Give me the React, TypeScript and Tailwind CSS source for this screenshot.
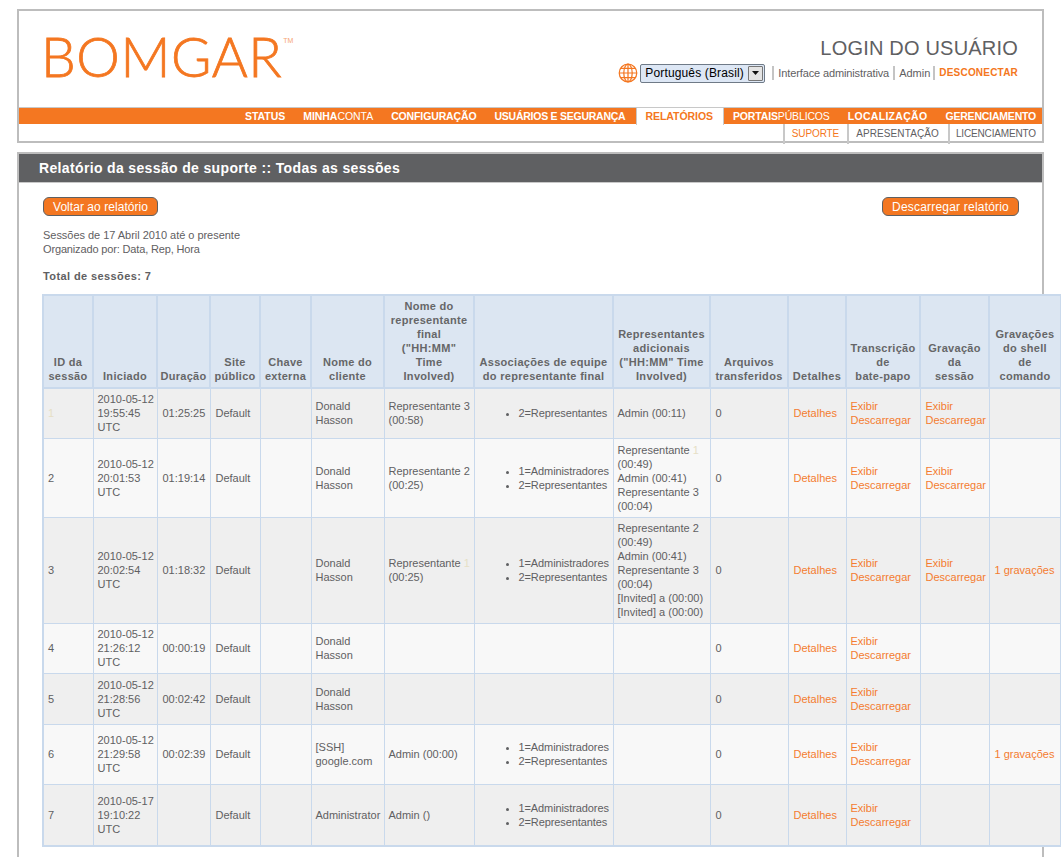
import React from "react";

type Row = {
  id: React.ReactNode;
  date: string[];
  dur: string;
  client: string[];
  rep: React.ReactNode[];
  teams: string[];
  extra: React.ReactNode[];
  recording: boolean;
  shell: boolean;
  height: string;
  odd: boolean;
};

const faintOne = <span className="text-[#e6dfc6]">1</span>;

const ADM = "1=Administradores";
const REP = "2=Representantes";

const rows: Row[] = [
  { id: faintOne, date: ["2010-05-12", "19:55:45", "UTC"], dur: "01:25:25", client: ["Donald", "Hasson"], rep: ["Representante 3", "(00:58)"], teams: [REP], extra: ["Admin (00:11)"], recording: true, shell: false, height: "h-[50px]", odd: true },
  { id: "2", date: ["2010-05-12", "20:01:53", "UTC"], dur: "01:19:14", client: ["Donald", "Hasson"], rep: ["Representante 2", "(00:25)"], teams: [ADM, REP], extra: [<>Representante {faintOne}</>, "(00:49)", "Admin (00:41)", "Representante 3", "(00:04)"], recording: true, shell: false, height: "h-[79px]", odd: false },
  { id: "3", date: ["2010-05-12", "20:02:54", "UTC"], dur: "01:18:32", client: ["Donald", "Hasson"], rep: [<>Representante {faintOne}</>, "(00:25)"], teams: [ADM, REP], extra: ["Representante 2", "(00:49)", "Admin (00:41)", "Representante 3", "(00:04)", "[Invited] a (00:00)", "[Invited] a (00:00)"], recording: true, shell: true, height: "h-[106px]", odd: true },
  { id: "4", date: ["2010-05-12", "21:26:12", "UTC"], dur: "00:00:19", client: ["Donald", "Hasson"], rep: [], teams: [], extra: [], recording: false, shell: false, height: "h-[50px]", odd: false },
  { id: "5", date: ["2010-05-12", "21:28:56", "UTC"], dur: "00:02:42", client: ["Donald", "Hasson"], rep: [], teams: [], extra: [], recording: false, shell: false, height: "h-[51px]", odd: true },
  { id: "6", date: ["2010-05-12", "21:29:58", "UTC"], dur: "00:02:39", client: ["[SSH]", "google.com"], rep: ["Admin (00:00)"], teams: [ADM, REP], extra: [], recording: false, shell: true, height: "h-[60px]", odd: false },
  { id: "7", date: ["2010-05-17", "19:10:22", "UTC"], dur: "", client: ["Administrator"], rep: ["Admin ()"], teams: [ADM, REP], extra: [], recording: false, shell: false, height: "h-[62px]", odd: true },
];

const columns: { w: string; label: React.ReactNode }[] = [
  { w: "w-[50px]", label: <>ID da<br />sessão</> },
  { w: "w-[64px]", label: "Iniciado" },
  { w: "w-[53px]", label: "Duração" },
  { w: "w-[50px]", label: <>Site<br />público</> },
  { w: "w-[51px]", label: <>Chave<br />externa</> },
  { w: "w-[73px]", label: <>Nome do<br />cliente</> },
  { w: "w-[90px]", label: <>Nome do<br />representante<br />final<br />("HH:MM"<br />Time<br />Involved)</> },
  { w: "w-[139px]", label: <>Associações de equipe<br />do representante final</> },
  { w: "w-[97px]", label: <>Representantes<br />adicionais<br />("HH:MM" Time<br />Involved)</> },
  { w: "w-[78px]", label: <>Arquivos<br />transferidos</> },
  { w: "w-[58px]", label: "Detalhes" },
  { w: "w-[74px]", label: <>Transcrição<br />de<br />bate-papo</> },
  { w: "w-[69px]", label: <>Gravação<br />da<br />sessão</> },
  { w: "w-[72px]", label: <>Gravações<br />do shell<br />de<br />comando</> },
];

const navItems: { text: React.ReactNode; cls: string }[] = [
  { text: "STATUS", cls: "" },
  { text: <>MINHA<span className="font-normal">CONTA</span></>, cls: "" },
  { text: "CONFIGURAÇÃO", cls: "tracking-[-0.13px]" },
  { text: "USUÁRIOS E SEGURANÇA", cls: "tracking-[-0.25px]" },
];

const navAfter: { text: React.ReactNode; cls: string }[] = [
  { text: <>PORTAIS<span className="font-normal">PÚBLICOS</span></>, cls: "tracking-[-0.15px]" },
  { text: "LOCALIZAÇÃO", cls: "tracking-[0.3px]" },
  { text: "GERENCIAMENTO", cls: "tracking-[-0.2px]" },
];

function Lines({ items }: { items: React.ReactNode[] }) {
  return (
    <>
      {items.map((t, i) => (
        <div key={i}>{t}</div>
      ))}
    </>
  );
}

function Globe() {
  return (
    <svg width="20" height="20" viewBox="0 0 21 21" fill="none" stroke="#f47721" strokeWidth="1.3">
      <circle cx="10.5" cy="10.5" r="9.2" />
      <ellipse cx="10.5" cy="10.5" rx="4.4" ry="9.2" />
      <path d="M10.5 1.3v18.4M1.3 10.5h18.4M2.8 5.6h15.4M2.8 15.4h15.4" />
    </svg>
  );
}

function PillButton({ children }: { children: React.ReactNode }) {
  return (
    <div className="h-[19px] px-[9px] rounded-[6px] border border-[#5f6062] bg-[#f47721] text-white text-[12px] leading-[18px]">
      {children}
    </div>
  );
}

export default function App() {
  return (
    <div className="w-[1061px] h-[857px] overflow-hidden bg-white font-['Liberation_Sans',Arial,sans-serif] text-[11px] leading-[14px] text-[#5f6062]">
      <header className="ml-[17px] mt-[9px] w-[1027px] h-[134px] border-2 border-[#bdbdbd] flex flex-col">
        <div className="h-[96px] shrink-0 flex justify-between">
          <div className="ml-[22px] mt-[12px] flex items-start">
            <span className="font-['Lato',sans-serif] font-light text-[55px] leading-[66px] tracking-[0.55px] text-[#f47721] [-webkit-text-stroke:0.8px_#f47721]">BOMGAR</span>
            <span className="text-[7px] leading-[8px] mt-[14px] ml-[1px] text-[#f7a673]">TM</span>
          </div>
          <div className="mr-[24px] flex flex-col items-end">
            <div className="mt-[25px] text-[20px] leading-[24px] tracking-[0.2px] text-[#5f6062]">LOGIN DO USUÁRIO</div>
            <div className="mt-[2px] flex items-center h-[22px]">
              <Globe />
              <div className="ml-[2px] w-[125px] h-[19px] flex items-center justify-between rounded-[2px] border border-[#6f7a87] bg-[#dde7f5] text-[12px] text-black pl-[4px] pr-[1px] tracking-[0.15px]">
                <span>Português (Brasil)</span>
                <span className="w-[15px] h-[15px] flex items-center justify-center bg-[#e4e4e4] border border-[#777] rounded-[1px]">
                  <svg width="7" height="4" viewBox="0 0 7 4"><path d="M0 0h7L3.5 4z" fill="#111" /></svg>
                </span>
              </div>
              <span className="ml-[7px] pl-[4px] border-l-2 border-[#c4c4c4] leading-[14px] tracking-[-0.12px]">Interface administrativa</span>
              <span className="ml-[4px] pl-[4px] border-l-2 border-[#c4c4c4] leading-[14px]">Admin</span>
              <span className="ml-[3px] pl-[4px] border-l-2 border-[#c4c4c4] leading-[14px] font-bold text-[10px] tracking-[0.2px] text-[#f47721]">DESCONECTAR</span>
            </div>
          </div>
        </div>
        <nav className="h-[16px] shrink-0 border-t border-[#c8c8c8] bg-[#f47721] flex justify-end text-white font-bold text-[10.5px] leading-[16px] tracking-[-0.05px] box-content">
          {navItems.map((n, i) => (
            <span key={i} className={`px-[9px] whitespace-nowrap ${n.cls}`}>{n.text}</span>
          ))}
          <span className="ml-[2px] h-[18px] pl-[8px] pr-[10px] bg-white border-x border-t border-[#c8c8c8] text-[#f47721] relative -top-[1px] leading-[17px] z-10 whitespace-nowrap">RELATÓRIOS</span>
          {navAfter.map((n, i) => (
            <span key={i} className={`px-[9px] last:pr-[6px] whitespace-nowrap ${n.cls}`}>{n.text}</span>
          ))}
        </nav>
        <div className="flex-1 flex justify-end text-[10px] leading-[20px] tracking-[0.1px] pr-[6px]">
          <span className="pl-[7px] pr-[8px] border-l-2 border-[#c8c8c8] text-[#f47721] tracking-[-0.1px]">SUPORTE</span>
          <span className="pl-[7px] pr-[9px] border-l-2 border-[#c8c8c8]">APRESENTAÇÃO</span>
          <span className="pl-[6px] border-l-2 border-[#c8c8c8] tracking-[-0.15px]">LICENCIAMENTO</span>
        </div>
      </header>

      <main className="ml-[17px] mt-[9px] w-[1027px] h-[720px] border-2 border-[#bdbdbd]">
        <h1 className="h-[29px] bg-[#5f6062] border-b border-[#c8c8c8] pl-[20px] text-white font-bold text-[14px] leading-[28px] tracking-[0.35px] box-border">
          Relatório da sessão de suporte :: Todas as sessões
        </h1>
        <div className="pl-[24px] pr-[23px] pt-[14px]">
          <div className="flex justify-between">
            <PillButton><span className="tracking-[0.05px]">Voltar ao relatório</span></PillButton>
            <PillButton><span className="tracking-[0.2px]">Descarregar relatório</span></PillButton>
          </div>
          <div className="mt-[12px] tracking-[-0.03px]">Sessões de 17 Abril 2010 até o presente</div>
          <div className="tracking-[-0.15px]">Organizado por: Data, Rep, Hora</div>
          <div className="mt-[13px] font-bold tracking-[0.4px]">Total de sessões: 7</div>

          <table className="mt-[11px] -ml-[1px] w-[1018px] table-fixed border-collapse border-2 border-[#c9d9ec]">
            <colgroup>
              {columns.map((c, i) => (
                <col key={i} className={c.w} />
              ))}
            </colgroup>
            <thead>
              <tr className="h-[93px] bg-[#dce6f2]">
                {columns.map((c, i) => (
                  <th key={i} className="border-2 border-[#c9d9ec] px-0 pb-[4px] align-bottom text-center font-bold tracking-[0.3px] text-[#666668]">
                    {c.label}
                  </th>
                ))}
              </tr>
            </thead>
            <tbody>
              {rows.map((r, i) => {
                const cell = "border border-[#c9d9ec] pl-[4px] pr-[4px] py-0 align-middle whitespace-nowrap";
                const wide = "border border-[#c9d9ec] pl-[5px] pr-[3px] py-0 align-middle whitespace-nowrap";
                const link = "text-[#f47c30]";
                return (
                  <tr key={i} className={`${r.height} ${r.odd ? "bg-[#efefef]" : "bg-[#f8f8f8]"}`}>
                    <td className={cell}>{r.id}</td>
                    <td className={cell}><Lines items={r.date} /></td>
                    <td className={wide}>{r.dur}</td>
                    <td className={wide}>Default</td>
                    <td className={cell}></td>
                    <td className={cell}><Lines items={r.client} /></td>
                    <td className={cell}><Lines items={r.rep} /></td>
                    <td className={cell}>
                      {r.teams.length > 0 && (
                        <ul className="list-disc pl-[40px] tracking-[-0.1px]">
                          {r.teams.map((t) => (
                            <li key={t}>{t}</li>
                          ))}
                        </ul>
                      )}
                    </td>
                    <td className={cell}><Lines items={r.extra} /></td>
                    <td className={wide}>0</td>
                    <td className={wide}><span className={link}>Detalhes</span></td>
                    <td className={cell}>
                      <div className={link}>Exibir</div>
                      <div className={link}>Descarregar</div>
                    </td>
                    <td className={wide}>
                      {r.recording && (
                        <>
                          <div className={link}>Exibir</div>
                          <div className={link}>Descarregar</div>
                        </>
                      )}
                    </td>
                    <td className={wide}>
                      {r.shell && <span className={link}>1 gravações</span>}
                    </td>
                  </tr>
                );
              })}
            </tbody>
          </table>
        </div>
      </main>
    </div>
  );
}
